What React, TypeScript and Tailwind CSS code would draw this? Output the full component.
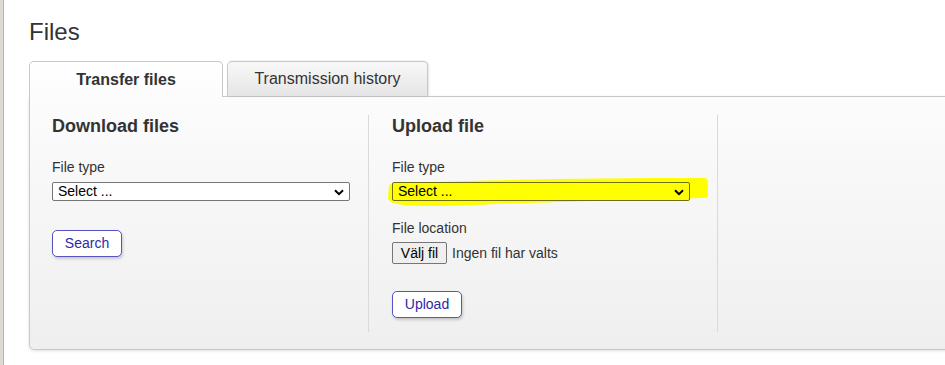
import React from 'react';

const Chevron: React.FC = () => (
  <svg width="10" height="7" viewBox="0 0 10 7" className="absolute right-[5px] top-[6px] pointer-events-none">
    <path d="M1 1.2 L5 5.2 L9 1.2" fill="none" stroke="#000" strokeWidth="2" />
  </svg>
);

const SelectBox: React.FC<{ highlight?: boolean }> = ({ highlight }) => (
  <div className="relative w-[298px] h-[19px]">
    {highlight && (
      // highlighter stroke drawn over the select in the screenshot
      <svg width="330" height="32" viewBox="0 0 330 32" className="absolute left-[-6px] top-[-6px] pointer-events-none">
        <path
          d="M3 10 C4 7 8 7 20 7 L80 5 C150 3 240 2 318 2 C322 2 322 4 322 8 L322 19 C322 21 320 22 316 22 C260 23 180 26 110 28 C70 30 40 31 18 29 C8 28 3 26 2 22 Z"
          fill="#ffff00"
        />
      </svg>
    )}
    <div
      className={`relative flex items-center h-full pl-[5px] text-[14px] text-black border rounded-[2px] ${
        highlight ? 'bg-[#ffff00] border-[#6f6f10]' : 'bg-white border-[#767676]'
      }`}
    >
      Select ...
      <Chevron />
    </div>
  </div>
);

const Label: React.FC<{ children: React.ReactNode; className?: string }> = ({ children, className }) => (
  <div className={`text-[14px] leading-[16px] text-[#333] ${className || ''}`}>{children}</div>
);

const ActionButton: React.FC<{ children: React.ReactNode; className?: string }> = ({ children, className }) => (
  <button
    className={`w-[70px] h-[27px] bg-white border-[1.5px] border-[#5753c2] rounded-[5px] text-[14px] text-[#2c2aa6] shadow-[1px_2px_3px_rgba(0,0,0,0.18)] ${className || ''}`}
  >
    {children}
  </button>
);

const App: React.FC = () => {
  return (
    <div className="flex w-[945px] h-[365px] overflow-hidden bg-white font-['Liberation_Sans',Arial,sans-serif]">
      <div className="w-[4px] shrink-0 bg-[#dedbd5] border-r border-[#b9b5ae]" />

      <div className="flex-1 pl-[25px] pt-[18px]">
        <h1 className="text-[24px] leading-[28px] text-[#333]">Files</h1>

        {/* tabs */}
        <div className="flex items-start gap-[4px] h-[35px] mt-[15px]">
          <div className="relative z-10 w-[194px] h-[36px] flex items-center justify-center bg-gradient-to-b from-white to-[#fcfcfc] border border-b-0 border-[#c8c8c8] rounded-t-[5px] text-[16px] font-bold text-[#333]">
            Transfer files
          </div>
          <div className="w-[201px] h-[35px] flex items-center justify-center bg-gradient-to-b from-[#f8f8f8] to-[#e5e5e5] border border-b-0 border-[#c8c8c8] rounded-t-[5px] text-[16px] text-[#333] shadow-[1px_0_2px_rgba(0,0,0,0.12)]">
            Transmission history
          </div>
        </div>

        {/* panel */}
        <div className="-mr-[12px] h-[254px] flex pt-[18px] pb-[17px] bg-gradient-to-b from-[#fcfcfc] to-[#efefef] border border-[#c8c8c8] rounded-bl-[5px] shadow-[0_1px_3px_rgba(0,0,0,0.12)]">
          <div className="w-[339px] pl-[22px] border-r border-[#dadada]">
            <h2 className="text-[18px] leading-[22px] font-bold text-[#333]">Download files</h2>
            <Label className="mt-[22px]">File type</Label>
            <div className="mt-[7px]">
              <SelectBox />
            </div>
            <ActionButton className="mt-[29px]">Search</ActionButton>
          </div>

          <div className="w-[349px] pl-[23px] border-r border-[#dadada]">
            <h2 className="text-[18px] leading-[22px] font-bold text-[#333]">Upload file</h2>
            <Label className="mt-[22px]">File type</Label>
            <div className="mt-[7px]">
              <SelectBox highlight />
            </div>
            <Label className="mt-[19px]">File location</Label>
            <div className="flex items-center mt-[6px] gap-[5px]">
              <button className="w-[55px] h-[22px] bg-[#efefef] border border-[#767676] rounded-[2px] text-[14px] text-black">
                Välj fil
              </button>
              <span className="text-[14px] text-[#333]">Ingen fil har valts</span>
            </div>
            <ActionButton className="mt-[27px]">Upload</ActionButton>
          </div>
        </div>
      </div>
    </div>
  );
};

export default App;
